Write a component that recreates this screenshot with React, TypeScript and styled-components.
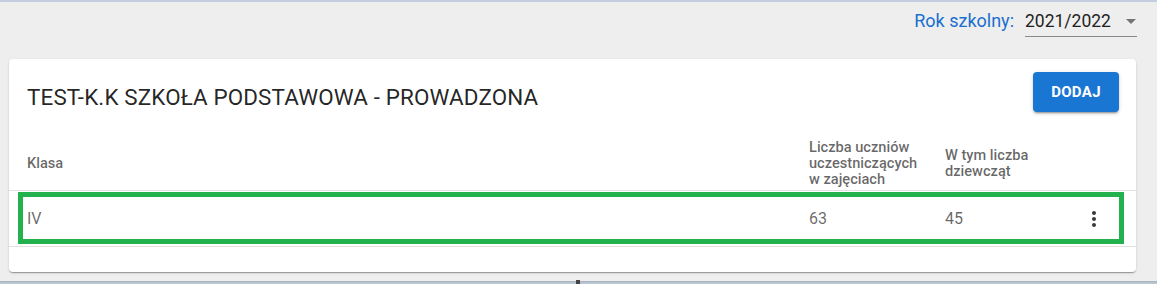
import React from "react";
import styled, { createGlobalStyle } from "styled-components";

const GlobalStyle = createGlobalStyle`
  html, body {
    margin: 0;
    padding: 0;
    background: #eeeeee;
    font-family: Roboto, "Noto Sans", "Liberation Sans", sans-serif;
  }
  * { box-sizing: border-box; }
`;

const Page = styled.div`
  width: 1157px;
  height: 284px;
  overflow: hidden;
  display: flex;
  flex-direction: column;
  background: #eeeeee;
  border-top: 2px solid #c5cee0;
  position: relative;
`;

const TopBar = styled.div`
  height: 57px;
  display: flex;
  justify-content: flex-end;
  align-items: flex-start;
  padding: 7px 20px 0 0;
  gap: 11px;
`;

const SchoolYearLabel = styled.span`
  color: #1a6fcf;
  font-size: 18px;
  line-height: 24px;
`;

const Select = styled.div`
  width: 112px;
  height: 28px;
  display: flex;
  align-items: flex-start;
  justify-content: space-between;
  border-bottom: 1px solid #8a8a8a;
  color: #1f1f1f;
  font-size: 17.5px;
  line-height: 24px;
`;

const Card = styled.div`
  margin: 0 21px 0 9px;
  background: #ffffff;
  border-radius: 4px;
  box-shadow: 0 2px 1px -1px rgba(0, 0, 0, 0.2), 0 1px 1px 0 rgba(0, 0, 0, 0.14),
    0 1px 3px 0 rgba(0, 0, 0, 0.12);
  padding-bottom: 25px;
`;

const CardHeader = styled.div`
  display: flex;
  justify-content: space-between;
  align-items: flex-start;
  padding: 13px 17px 23px 18px;
`;

const Title = styled.h2`
  margin: 9px 0 0 0;
  font-size: 22.4px;
  line-height: 32px;
  font-weight: 400;
  color: rgba(0, 0, 0, 0.87);
  letter-spacing: 0.15px;
`;

const PrimaryButton = styled.button`
  width: 86px;
  height: 40px;
  border: none;
  border-radius: 4px;
  background: #1976d2;
  color: #ffffff;
  font-family: inherit;
  font-size: 15px;
  font-weight: 700;
  letter-spacing: 0.3px;
  text-transform: uppercase;
  box-shadow: 0 3px 1px -2px rgba(0, 0, 0, 0.2), 0 2px 2px 0 rgba(0, 0, 0, 0.14),
    0 1px 5px 0 rgba(0, 0, 0, 0.12);
  cursor: pointer;
`;

const Grid = styled.div<{ $head?: boolean }>`
  display: grid;
  grid-template-columns: 1fr 136px 136px 73px;
  align-items: center;
  min-height: ${(p) => (p.$head ? "55px" : "56px")};
  border-bottom: 1px solid #e2e2e2;
  position: relative;
`;

const HeadCell = styled.div`
  padding: 0 0 0 18px;
  white-space: nowrap;
  font-size: 14.6px;
  line-height: 16px;
  font-weight: 500;
  color: rgba(0, 0, 0, 0.6);
`;

const Cell = styled.div`
  padding: 0 18px;
  font-size: 16px;
  line-height: 20px;
  color: rgba(0, 0, 0, 0.6);
`;

const ActionCell = styled.div`
  padding-left: 19px;
  display: flex;
  align-items: center;
`;

const IconButton = styled.button`
  width: 24px;
  height: 24px;
  padding: 0;
  border: none;
  background: transparent;
  display: flex;
  align-items: center;
  justify-content: center;
  color: #3a3a3a;
  cursor: pointer;
`;

const Highlight = styled.div`
  position: absolute;
  left: 9px;
  right: 12px;
  top: 1px;
  bottom: 2px;
  border: 5px solid #22b14c;
  pointer-events: none;
`;

const BottomStrip = styled.div`
  margin-top: auto;
  height: 3px;
  background: #b9c6d2;
  border-top: 1px solid #a9b4c0;
  position: relative;
`;

const ScrollMark = styled.span`
  position: absolute;
  left: 576px;
  top: -2px;
  width: 4px;
  height: 5px;
  background: #444;
`;

const DropArrow = () => (
  <svg width="24" height="24" viewBox="0 0 24 24" style={{ marginRight: -6 }}>
    <path d="M7 10l5 5 5-5z" fill="#757575" />
  </svg>
);

const MoreVert = () => (
  <svg width="24" height="24" viewBox="0 0 24 24">
    <path
      fill="currentColor"
      d="M12 8c1.1 0 2-.9 2-2s-.9-2-2-2-2 .9-2 2 .9 2 2 2zm0 2c-1.1 0-2 .9-2 2s.9 2 2 2 2-.9 2-2-.9-2-2-2zm0 6c-1.1 0-2 .9-2 2s.9 2 2 2 2-.9 2-2-.9-2-2-2z"
    />
  </svg>
);

const rows = [{ klasa: "IV", uczniowie: 63, dziewczeta: 45 }];

export default function App() {
  return (
    <>
      <GlobalStyle />
      <Page>
        <TopBar>
          <SchoolYearLabel>Rok szkolny:</SchoolYearLabel>
          <Select>
            <span>2021/2022</span>
            <DropArrow />
          </Select>
        </TopBar>
        <Card>
          <CardHeader>
            <Title>TEST-K.K SZKOŁA PODSTAWOWA - PROWADZONA</Title>
            <PrimaryButton>Dodaj</PrimaryButton>
          </CardHeader>
          <Grid $head>
            <HeadCell>Klasa</HeadCell>
            <HeadCell>
              Liczba uczniów
              <br />
              uczestniczących
              <br />w zajęciach
            </HeadCell>
            <HeadCell>
              W tym liczba
              <br />
              dziewcząt
            </HeadCell>
            <HeadCell />
          </Grid>
          {rows.map((r) => (
            <Grid key={r.klasa}>
              <Cell>{r.klasa}</Cell>
              <Cell>{r.uczniowie}</Cell>
              <Cell>{r.dziewczeta}</Cell>
              <ActionCell>
                <IconButton aria-label="more">
                  <MoreVert />
                </IconButton>
              </ActionCell>
              <Highlight />
            </Grid>
          ))}
        </Card>
        <BottomStrip>
          <ScrollMark />
        </BottomStrip>
      </Page>
    </>
  );
}
